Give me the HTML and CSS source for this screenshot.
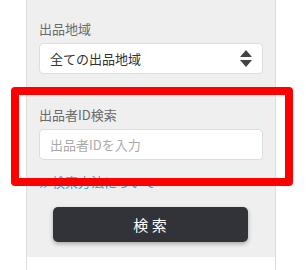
FILE: index.html
```html
<!DOCTYPE html>
<html lang="ja">
<head>
    <meta charset="UTF-8">
    <meta name="viewport" content="width=device-width, initial-scale=1.0">
    <title>出品者検索</title>
    <link rel="stylesheet" href="styles.css">
</head>
<body>
    <div class="sidebar">
        <form class="search-box">
            <div class="field">
                <label for="area">出品地域</label>
                <div class="select-wrap">
                    <select id="area" name="area">
                        <option>全ての出品地域</option>
                    </select>
                    <svg class="sort-icon" width="12" height="18" viewBox="0 0 12 18">
                        <path d="M6 0 L12 7 L0 7 Z M0 10 L12 10 L6 17 Z" fill="#444"/>
                    </svg>
                </div>
            </div>

            <div class="field">
                <label for="seller-id">出品者ID検索</label>
                <input type="text" id="seller-id" name="seller-id" placeholder="出品者IDを入力">
            </div>

            <a href="#" class="help-link">≫検索方法について</a>

            <button type="submit" class="btn-search">検 索</button>
        </form>
    </div>

    <div class="highlight"></div>
</body>
</html>
```

FILE: styles.css
```css
body {
    margin: 0;
    background-color: #fff;
    font-family: 'Noto Sans CJK JP', 'Noto Sans', sans-serif;
    color: #333;
}

.sidebar {
    margin-left: 26px;
    width: 248px;
    min-height: 100vh;
    border-left: 1px solid #ddd;
    border-right: 1px solid #ddd;
}

.search-box {
    background-color: #efefef;
    padding: 20px 12px 15px;
    display: flex;
    flex-direction: column;
}

.field {
    display: flex;
    flex-direction: column;
    margin-bottom: 32px;
}

.field:nth-child(2) {
    margin-bottom: 13px;
}

label {
    font-size: 13px;
    line-height: 18px;
    color: #6a6a6a;
    margin-bottom: 5px;
}

.select-wrap {
    position: relative;
}

select,
input[type="text"] {
    box-sizing: border-box;
    width: 100%;
    height: 31px;
    margin: 0;
    padding: 0 10px;
    border: 1px solid #ddd;
    border-radius: 4px;
    background-color: #fff;
    font-family: inherit;
    font-size: 13px;
    color: #333;
    outline: none;
}

select {
    appearance: none;
    -webkit-appearance: none;
}

input::placeholder {
    color: #aaa;
}

.sort-icon {
    position: absolute;
    right: 11px;
    top: 7px;
    pointer-events: none;
}

.help-link {
    font-size: 13px;
    line-height: 18px;
    color: #29a3da;
    text-decoration: none;
    margin-bottom: 16px;
}

.btn-search {
    align-self: center;
    width: 195px;
    height: 35px;
    margin-left: -2px;
    border: none;
    border-radius: 5px;
    background-color: #323338;
    color: #fff;
    font-family: inherit;
    font-size: 15px;
    box-shadow: 0 2px 4px rgba(0, 0, 0, 0.3);
    cursor: pointer;
}

/* marco rojo */
.highlight {
    position: absolute;
    left: 11px;
    top: 87px;
    width: 266px;
    height: 83px;
    border: 8px solid #ff0000;
    border-radius: 4px;
}
```
